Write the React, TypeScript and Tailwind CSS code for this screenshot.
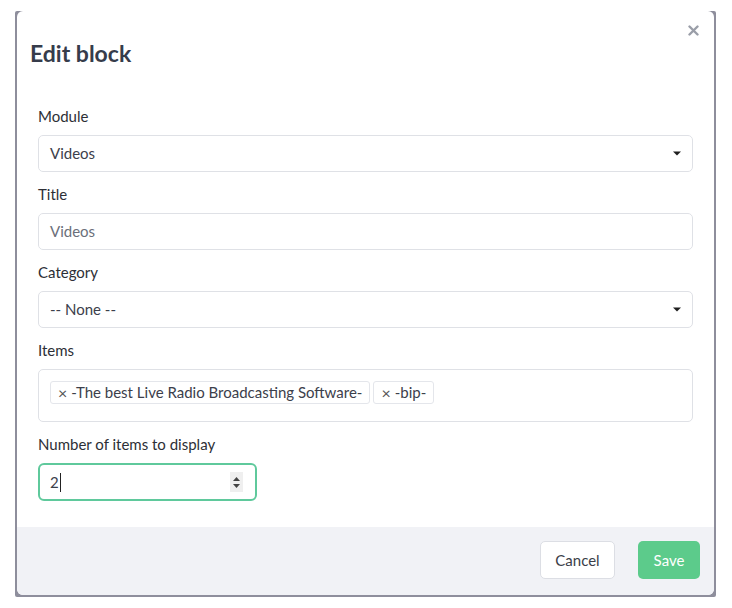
import React from 'react';

const font = { fontFamily: 'Lato, "Noto Sans", sans-serif' };

function Caret() {
  return (
    <svg width="8" height="5" viewBox="0 0 8 5" className="shrink-0">
      <path d="M0 0.5h8L4 4.5z" fill="#1f1f1f" />
    </svg>
  );
}

function Field({ label, children, last }: { label: string; children: React.ReactNode; last?: boolean }) {
  return (
    <div className={last ? '' : 'mb-[12px]'}>
      <div className="h-[20px] leading-[20px] text-[15px] text-[#2d2f36] mb-[9px]">{label}</div>
      {children}
    </div>
  );
}

function SelectBox({ value }: { value: string }) {
  return (
    <div className="h-[37px] flex items-center justify-between pl-[11px] pr-[11px] border border-[#dfe1e6] rounded-[5px] bg-white text-[15px] text-[#3c404b]">
      <span>{value}</span>
      <Caret />
    </div>
  );
}

function Tag({ text }: { text: string }) {
  return (
    <div className="h-[23px] flex items-center px-[7px] border border-[#e4e6eb] rounded-[3px] bg-white text-[15px] text-[#3c404b]">
      <span className="mr-[4px] text-[16px] text-[#555]">×</span>
      <span>{text}</span>
    </div>
  );
}

export default function App() {
  return (
    <div className="w-[732px] h-[608px] bg-white pt-[11px] pl-[15px]" style={font}>
      <div className="w-[701px] h-[586px] bg-[#8e8e9c] rounded-[2px] px-[2px] pb-[2px]">
        <div className="h-full bg-white rounded-[6px] flex flex-col overflow-hidden">
          {/* header */}
          <div className="relative pl-[13px] pt-[28px] pb-[39px]">
            <h1 className="text-[23px] leading-[28px] font-bold text-[#363c4b]">Edit block</h1>
            <button className="absolute right-[13px] top-[11px] w-[16px] h-[16px] flex items-center justify-center">
              <svg width="11" height="11" viewBox="0 0 11 11">
                <path d="M1.5 1.5l8 8M9.5 1.5l-8 8" stroke="#9a9ea8" strokeWidth="2.4" strokeLinecap="round" />
              </svg>
            </button>
          </div>

          {/* body */}
          <div className="px-[21px] flex-1">
            <Field label="Module">
              <SelectBox value="Videos" />
            </Field>
            <Field label="Title">
              <div className="h-[37px] flex items-center pl-[11px] border border-[#dfe1e6] rounded-[5px] text-[15px] text-[#6b6f7a]">
                Videos
              </div>
            </Field>
            <Field label="Category">
              <SelectBox value="-- None --" />
            </Field>
            <Field label="Items">
              <div className="h-[53px] border border-[#dfe1e6] rounded-[5px] pt-[11px] pl-[11px] flex items-start gap-[3px]">
                <Tag text="-The best Live Radio Broadcasting Software-" />
                <Tag text="-bip-" />
              </div>
            </Field>
            <Field label="Number of items to display" last>
              <div className="w-[219px] h-[38px] border-2 border-[#5fc99c] rounded-[6px] flex items-center justify-between pl-[10px] pr-[12px] text-[15px] text-[#3c404b]">
                <span className="flex items-center">
                  2<span className="w-px h-[19px] bg-[#222] ml-px" />
                </span>
                <span className="w-[13px] h-[20px] bg-[#efefef] flex flex-col items-center justify-center gap-[3px]">
                  <svg width="7" height="4" viewBox="0 0 7 4"><path d="M0 4h7L3.5 0z" fill="#444" /></svg>
                  <svg width="7" height="4" viewBox="0 0 7 4"><path d="M0 0h7L3.5 4z" fill="#444" /></svg>
                </span>
              </div>
            </Field>
          </div>

          {/* footer */}
          <div className="h-[68px] bg-[#f1f2f6] flex items-center justify-end gap-[23px] pr-[14px] pb-[2px]">
            <button className="h-[38px] w-[75px] bg-white border border-[#dcdee4] rounded-[5px] text-[15px] text-[#3a3e48]">
              Cancel
            </button>
            <button className="h-[38px] w-[62px] bg-[#5ccb8b] rounded-[5px] text-[15px] text-white">
              Save
            </button>
          </div>
        </div>
      </div>
    </div>
  );
}
